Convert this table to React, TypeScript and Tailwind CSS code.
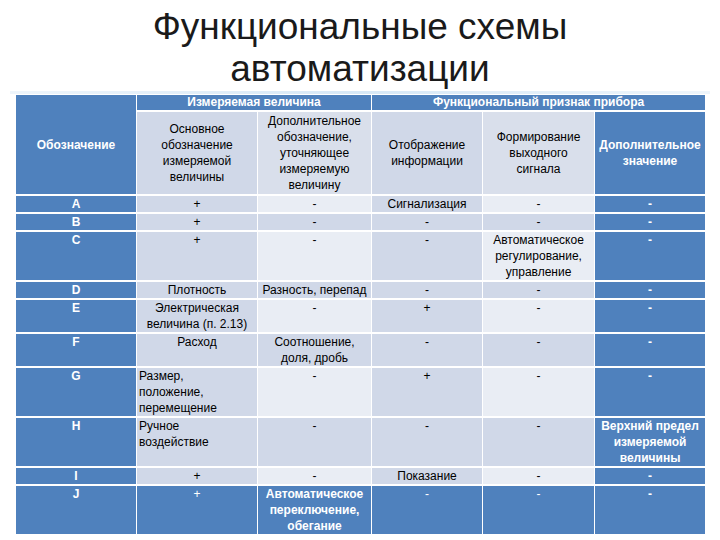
import React from "react";

const BLUE = "bg-[#4f81bd]";
const DARK = "bg-[#d0d8e8]";
const LIGHT = "bg-[#e9edf4]";

type Row = { k: string; c: string[][]; last: string[]; left?: boolean };

const rows: Row[] = [
  { k: "A", c: [["+"], ["-"], ["Сигнализация"], ["-"]], last: ["-"] },
  { k: "B", c: [["+"], ["-"], ["-"], ["-"]], last: ["-"] },
  { k: "C", c: [["+"], ["-"], ["-"], ["Автоматическое", "регулирование,", "управление"]], last: ["-"] },
  { k: "D", c: [["Плотность"], ["Разность, перепад"], ["-"], ["-"]], last: ["-"] },
  { k: "E", c: [["Электрическая", "величина (п. 2.13)"], ["-"], ["+"], ["-"]], last: ["-"] },
  { k: "F", c: [["Расход"], ["Соотношение,", "доля, дробь"], ["-"], ["-"]], last: ["-"] },
  { k: "G", c: [["Размер,", "положение,", "перемещение"], ["-"], ["+"], ["-"]], last: ["-"], left: true },
  { k: "H", c: [["Ручное", "воздействие"], ["-"], ["-"], ["-"]], last: ["Верхний предел", "измеряемой", "величины"], left: true },
  { k: "I", c: [["+"], ["-"], ["Показание"], ["-"]], last: ["-"] },
];

function Lines({ lines }: { lines: string[] }) {
  return (
    <>
      {lines.map((l, i) => (
        <div key={i}>{l}</div>
      ))}
    </>
  );
}

export default function App() {
  return (
    <div className="w-[720px] h-[540px] bg-white overflow-hidden font-['Liberation_Sans',Arial,sans-serif]">
      <div className="pt-[6px] h-[91px] text-center text-[37px] leading-[42px] text-[#1a1a1a]">
        <div>Функциональные схемы</div>
        <div>автоматизации</div>
      </div>
      <div className="mx-[10px] h-[3px] bg-gradient-to-r from-[#eef5fb] via-[#d7e8f6] to-[#eef5fb]" />
      <table className="ml-[15px] w-[686px] table-fixed border-separate border-spacing-x-px border-spacing-y-[2px] -mt-[1px] text-[12px] leading-[16px] text-black">
        <colgroup>
          <col className="w-[120px]" />
          <col className="w-[120px]" />
          <col className="w-[113px]" />
          <col className="w-[110px]" />
          <col className="w-[111px]" />
          <col className="w-[110px]" />
        </colgroup>
        <tbody>
          <tr>
            <td rowSpan={2} className={`${BLUE} text-white font-bold text-center align-middle`}>
              Обозначение
            </td>
            <td colSpan={2} className={`${BLUE} text-white font-bold text-center h-[15px] leading-[15px]`}>
              Измеряемая величина
            </td>
            <td colSpan={3} className={`${BLUE} text-white font-bold text-center leading-[15px]`}>
              Функциональный признак прибора
            </td>
          </tr>
          <tr>
            <td className={`${DARK} text-center align-middle`}>
              <Lines lines={["Основное", "обозначение", "измеряемой", "величины"]} />
            </td>
            <td className="bg-[#d9dfeb] text-center align-middle py-[1px]">
              <Lines lines={["Дополнительное", "обозначение,", "уточняющее", "измеряемую", "величину"]} />
            </td>
            <td className={`${DARK} text-center align-middle`}>
              <Lines lines={["Отображение", "информации"]} />
            </td>
            <td className="bg-[#d9dfeb] text-center align-middle">
              <Lines lines={["Формирование", "выходного", "сигнала"]} />
            </td>
            <td className={`${BLUE} text-white font-bold text-center align-middle`}>
              <Lines lines={["Дополнительное", "значение"]} />
            </td>
          </tr>
          {rows.map((r, ri) => {
            const odd = ri % 2 === 0;
            return (
              <tr key={r.k}>
                <td className={`${BLUE} text-white font-bold text-center align-top`}>{r.k}</td>
                {r.c.map((cell, ci) => {
                  const bg = odd ? (ci % 2 === 0 ? DARK : LIGHT) : DARK;
                  const align = r.left && ci === 0 ? "text-left pl-[2px]" : "text-center";
                  return (
                    <td key={ci} className={`${bg} ${align} align-top`}>
                      <Lines lines={cell} />
                    </td>
                  );
                })}
                <td className={`${BLUE} text-white font-bold text-center align-top`}>
                  <Lines lines={r.last} />
                </td>
              </tr>
            );
          })}
          <tr>
            <td className={`${BLUE} text-white font-bold text-center align-top`}>J</td>
            <td className={`${BLUE} text-white text-center align-top`}>+</td>
            <td className={`${BLUE} text-white font-bold text-center align-top`}>
              <Lines lines={["Автоматическое", "переключение,", "обегание"]} />
            </td>
            <td className={`${BLUE} text-white text-center align-top`}>-</td>
            <td className={`${BLUE} text-white text-center align-top`}>-</td>
            <td className={`${BLUE} text-white font-bold text-center align-top`}>-</td>
          </tr>
        </tbody>
      </table>
    </div>
  );
}
